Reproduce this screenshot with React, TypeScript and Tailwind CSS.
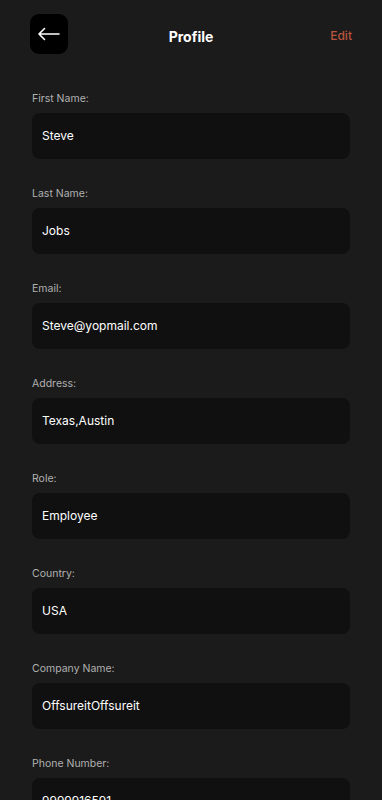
const fields = [
  { label: 'First Name:', value: 'Steve' },
  { label: 'Last Name:', value: 'Jobs' },
  { label: 'Email:', value: 'Steve@yopmail.com' },
  { label: 'Address:', value: 'Texas,Austin' },
  { label: 'Role:', value: 'Employee' },
  { label: 'Country:', value: 'USA' },
  { label: 'Company Name:', value: 'OffsureitOffsureit' },
  { label: 'Phone Number:', value: '9999916591' },
];

const App = () => {
  return (
    <div
      className="min-h-screen bg-[#1b1b1b] pb-10"
      style={{ fontFamily: 'Inter, "Noto Sans", sans-serif' }}
    >
      {/* Header */}
      <div className="flex items-center justify-between px-[30px] pt-[14px]">
        <button className="flex h-[40px] w-[38px] items-center justify-center rounded-[9px] bg-black">
          <svg width="24" height="14" viewBox="0 0 24 14" fill="none" stroke="white" strokeWidth={1.6} strokeLinecap="round" strokeLinejoin="round">
            <path d="M22 7H2M7.5 1.5L2 7l5.5 5.5" />
          </svg>
        </button>
        <h1 className="pt-[4px] text-[14px] font-bold text-white">Profile</h1>
        <span className="w-[38px] pt-[4px] text-right text-[12px] font-medium text-[#b9553d]">Edit</span>
      </div>

      {/* Fields */}
      <div className="mt-[38px] flex flex-col gap-[28px] px-8">
        {fields.map((f) => (
          <div key={f.label} className="flex flex-col">
            <label className="h-[13px] text-[10.5px] leading-[13px] text-[#b0b0b0]">{f.label}</label>
            <div className="mt-[8px] flex h-[46px] items-center rounded-[8px] bg-[#101010] pl-[10px] text-[12px] text-white">
              {f.value}
            </div>
          </div>
        ))}
      </div>
    </div>
  );
};

export default App;
